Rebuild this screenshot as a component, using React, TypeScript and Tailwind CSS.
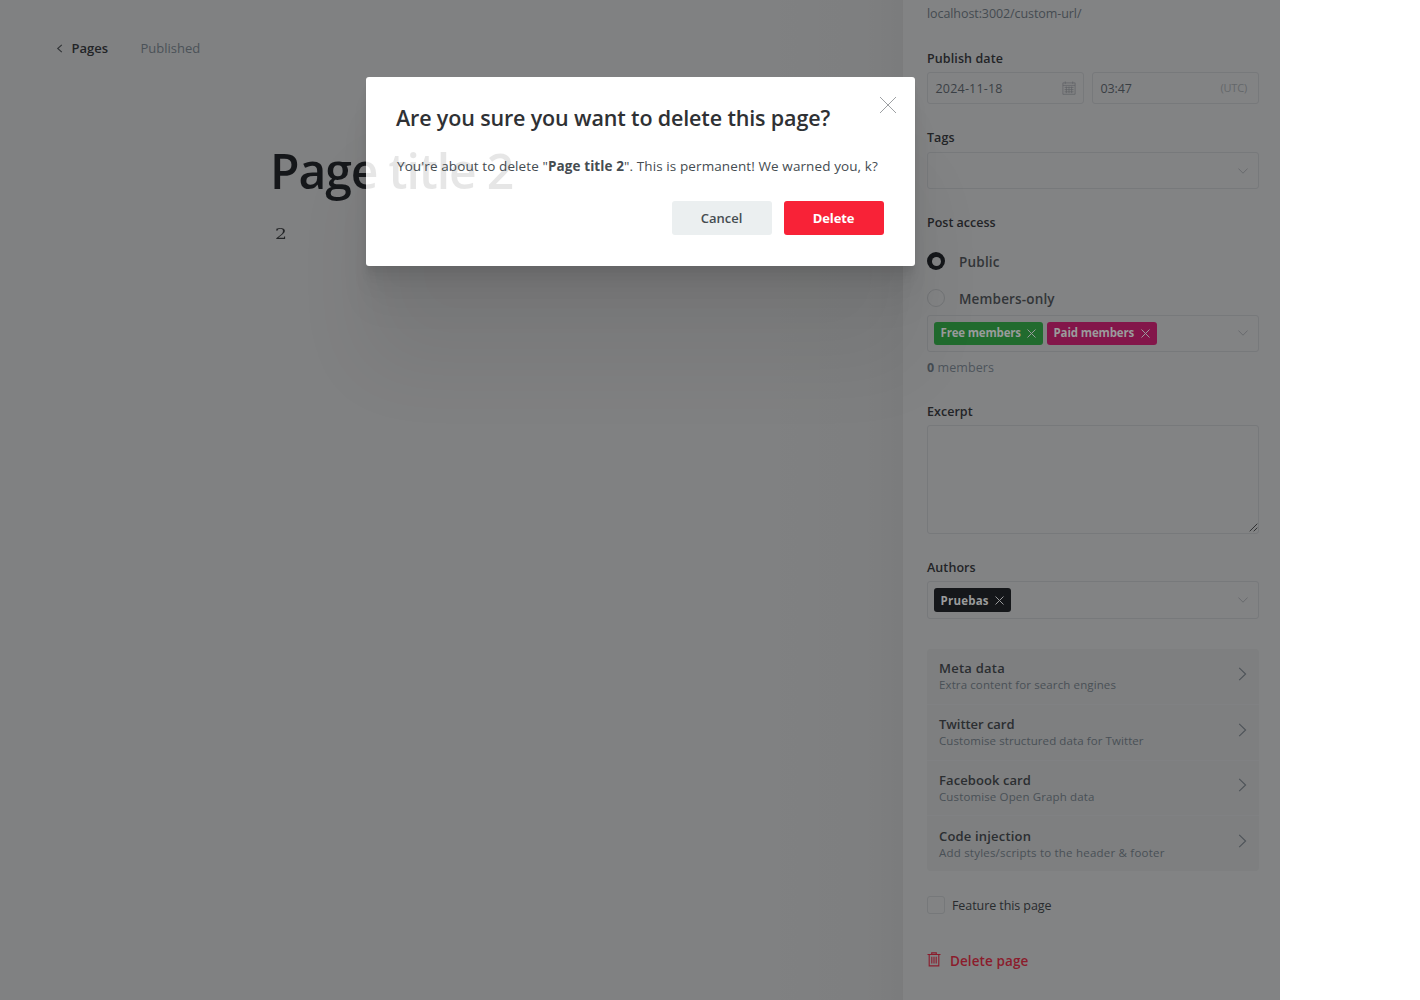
function ChevronDown() {
  return (
    <svg className="shrink-0" width="10" height="6" viewBox="0 0 10 6" fill="none" stroke="#696b6e" strokeWidth="1">
      <path d="M.4.5 5 5.2 9.6.5" />
    </svg>
  );
}

function Cross({ className = "", size }: { className?: string; size: number }) {
  return (
    <svg className={className} width={size} height={size} viewBox="0 0 18 18" fill="none" stroke="currentColor">
      <path vectorEffect="non-scaling-stroke" d="M1 1l16 16M17 1 1 17" />
    </svg>
  );
}

function Calendar() {
  return (
    <svg className="mb-px" width="14" height="14" viewBox="0 0 14 14" fill="none" stroke="#5f6265" strokeWidth=".7">
      <path d="M.9 1.9h12.2v11.4H.9zM.9 4.4h12.2M2.6 6.4h9M2.6 8.6h9M2.6 10.8h9M4.4 5.5v6.6M7 5.5v6.6M9.6 5.5v6.6M3.3.5v2.4M10.7.5v2.4" />
    </svg>
  );
}

function Trash() {
  return (
    <svg width="14" height="15" viewBox="0 0 14 15" fill="none" stroke="#8b1c2c" strokeWidth="1.1">
      <path d="M.5 2.5h13M2.2 2.7v11.2h9.6V2.7M4.7 2.3V.9h4.6v1.4M4.8 4.8v6.8M7 4.8v6.8M9.2 4.8v6.8" />
    </svg>
  );
}

function Tag({ label, className }: { label: string; className: string }) {
  return (
    <span className={"flex items-center justify-between rounded-[3px] pr-[7px] pl-[6.5px] text-[#9a9b9c] " + className}>
      <span className="text-[11.5px] leading-[22px] font-bold whitespace-nowrap">{label}</span>
      <Cross size={9} />
    </span>
  );
}

const label = "text-[12.5px] leading-[18px] font-semibold whitespace-nowrap text-[#222427]";
const field = "flex items-center rounded-[3px] border border-[#77797b]";

const cards = [
  { title: "Meta data", note: "Extra content for search engines", titleClass: "tracking-[0.24px]", noteClass: "tracking-[0.11px]" },
  { title: "Twitter card", note: "Customise structured data for Twitter", titleClass: "tracking-[-0.05px]", noteClass: "tracking-[0.09px]" },
  { title: "Facebook card", note: "Customise Open Graph data", titleClass: "tracking-[0.08px]", noteClass: "tracking-[0.13px]" },
  { title: "Code injection", note: "Add styles/scripts to the header & footer", titleClass: "tracking-[0.18px]", noteClass: "tracking-[0.21px]" },
];

function Editor() {
  return (
    <main className="flex w-[903px] flex-col bg-[#808182] bg-[linear-gradient(to_right,transparent_760px,rgba(0,0,0,0.01)_820px,rgba(0,0,0,0.02)_870px,rgba(0,0,0,0.045)_903px)]">
      <nav className="mt-[39px] ml-[56px] flex h-5 items-center text-[13px] whitespace-nowrap">
        <svg className="mb-[2px]" width="7" height="9" viewBox="0 0 7 9" fill="none" stroke="#303336" strokeWidth="1.1">
          <path d="M5.8.8 1.7 4.5l4.1 3.7" />
        </svg>
        <a className="ml-[8.5px] w-[69px] font-semibold text-[#222427]">Pages</a>
        <span className="text-[#4b5258]">Published</span>
      </nav>
      <h1 className="relative z-10 mt-[80px] ml-[270px] h-16 w-[250px] bg-[linear-gradient(to_right,#15171a_96px,#e6e6e6_96px)] bg-clip-text text-[48px] leading-[64px] font-semibold tracking-[-1.1px] whitespace-nowrap text-transparent">
        Page title 2
      </h1>
      <p className="mt-[19px] ml-[274.5px] w-[10px] origin-left scale-x-125 font-['DejaVu_Serif',serif] text-[15px] leading-6 text-[#232527]">2</p>
    </main>
  );
}

function Settings() {
  return (
    <aside className="flex w-[377px] flex-col bg-[#828384] pr-[21px] pl-6 text-[12.5px]">
      <p className="pt-[5px] leading-[18px] tracking-[-0.08px] text-[#454b51]">localhost:3002/custom-url/</p>
      <div className={"mt-[27px] tracking-[0.1px] " + label}>Publish date</div>
      <div className="mt-[4px] flex gap-2 text-[#3a3f44]">
        <div className={"h-8 w-[157px] justify-between pr-[7px] pl-[7.5px] tracking-[0.2px] " + field}>
          <span className="pt-[2px]">2024-11-18</span>
          <Calendar />
        </div>
        <div className={"h-8 flex-1 justify-between pr-[11px] pl-[7.5px] tracking-[-0.1px] " + field}>
          <span className="pt-[2px]">03:47</span>
          <span className="text-[11px] tracking-[-0.2px] text-[#64676a]">(UTC)</span>
        </div>
      </div>

      <div className={"mt-[25px] tracking-[0.05px] " + label}>Tags</div>
      <div className={"mt-[5px] h-[37px] justify-end pr-[10.5px] " + field}>
        <ChevronDown />
      </div>

      <div className={"mt-[25px] " + label}>Post access</div>
      <div className="mt-[20px] flex h-[18px] items-center gap-[14px] text-[13.5px] font-semibold text-[#323538]">
        <span className="size-[18px] rounded-full bg-[#15171a] p-[4.5px]">
          <span className="block size-[9px] rounded-full bg-[#828384]" />
        </span>
        <span className="pt-[2px] leading-4 tracking-[0.2px]">Public</span>
      </div>
      <div className="mt-[19px] flex h-[18px] items-center gap-[14px] text-[13.5px] font-semibold text-[#323538]">
        <span className="size-[18px] rounded-full border border-[#727476]" />
        <span className="pt-[2px] leading-4 tracking-[0.16px]">Members-only</span>
      </div>
      <div className={"mt-[8px] h-[37px] gap-[4px] pr-[10.5px] pb-px pl-[6px] " + field}>
        <Tag label="Free members" className="h-[23px] w-[109px] bg-[#216b2e] tracking-[-0.18px]" />
        <Tag label="Paid members" className="h-[23px] w-[110px] bg-[#83164a] tracking-[-0.14px]" />
        <span className="ml-auto">
          <ChevronDown />
        </span>
      </div>
      <p className="mt-[7px] leading-[18px] tracking-[0.08px] text-[#4d545b]">
        <b className="text-[#444b52]">0</b> members
      </p>

      <div className={"mt-[26px] tracking-[0.04px] " + label}>Excerpt</div>
      <div className={"mt-[4px] h-[109px] items-end! justify-end pb-[1px] " + field}>
        <svg width="9" height="9" viewBox="0 0 9 9" fill="none" stroke="#303133" strokeWidth="1">
          <path d="M.7 8.3 8.3.7M4.7 8.3l3.6-3.6" />
        </svg>
      </div>

      <div className={"mt-[25px] tracking-[0.08px] " + label}>Authors</div>
      <div className={"mt-[4px] h-[38px] pr-[10.5px] pl-[6px] " + field}>
        <Tag label="Pruebas" className="h-[24px] w-[77px] bg-[#15171a] pt-px tracking-[0.22px]" />
        <span className="ml-auto">
          <ChevronDown />
        </span>
      </div>

      <div className="mt-[30px] flex h-[222px] flex-col divide-y divide-[#808183] rounded-[4px] bg-[#7e7f80]">
        {cards.map((c) => (
          <div key={c.title} className="flex flex-1 items-center justify-between pr-[12.5px] pl-[12px]">
            <div className="whitespace-nowrap">
              <div className={"text-[13px] leading-[18px] font-semibold text-[#2b2e31] " + c.titleClass}>{c.title}</div>
              <div className={"text-[11.5px] leading-[16px] text-[#495056] " + c.noteClass}>{c.note}</div>
            </div>
            <svg className="mb-[5px]" width="9" height="14" viewBox="0 0 9 14" fill="none" stroke="#4d5358" strokeWidth="1.1">
              <path d="M1.2.8 7.6 7 1.2 13.2" />
            </svg>
          </div>
        ))}
      </div>

      <div className="mt-[25px] flex h-[18px] items-center gap-[7px]">
        <span className="size-[18px] rounded-[3px] border border-[#76787a]" />
        <span className="pt-[2px] tracking-[-0.08px] text-[#282b2e]">Feature this page</span>
      </div>
      <div className="mt-[36px] flex h-5 items-center gap-[9px]">
        <span className="pb-[2px]">
          <Trash />
        </span>
        <span className="pt-[2px] text-[13.5px] font-semibold tracking-[0.1px] text-[#8b1c2c]">Delete page</span>
      </div>
    </aside>
  );
}

function DeleteDialog() {
  return (
    <section className="absolute top-[77px] left-[365.5px] h-[189px] w-[549.5px] rounded-[3px] bg-white shadow-[0_3px_2px_rgba(0,0,0,0.02),0_7px_5px_rgba(0,0,0,0.028),0_12px_10px_rgba(0,0,0,0.03),0_22px_18px_rgba(0,0,0,0.035),0_42px_33px_rgba(0,0,0,0.04),0_100px_80px_rgba(0,0,0,0.06)]">
      <div className="relative z-20 pt-[26px] pr-[31.5px] pl-[30.5px]">
        <h2 className="text-[21.5px] leading-[30px] font-semibold tracking-[-0.15px] whitespace-nowrap text-[#2f3134]">
          Are you sure you want to delete this page?
        </h2>
        <p className="mt-[23px] pl-px text-[13.5px] leading-5 tracking-[0.1px] whitespace-nowrap text-[#454c51]">
          You're about to delete "<b>Page title 2</b>". This is permanent! We warned you, k?
        </p>
        <div className="mt-[25px] flex justify-end gap-3 text-[13px]">
          <button className="h-[34px] w-[100px] rounded-[3px] bg-[#ebeff0] pt-[2px] font-semibold text-[#454c51]">Cancel</button>
          <button className="h-[34px] w-[100px] rounded-[3px] bg-[#f82237] pt-[2px] font-bold tracking-[-0.13px] text-white">Delete</button>
        </div>
        <Cross size={18} className="absolute top-[19px] right-[18px] text-[#9da0a3]" />
      </div>
    </section>
  );
}

export default function App() {
  return (
    <div className="relative flex h-[1000px] w-[1420px] overflow-hidden bg-white font-['Open_Sans',sans-serif]">
      <Editor />
      <Settings />
      <DeleteDialog />
    </div>
  );
}
